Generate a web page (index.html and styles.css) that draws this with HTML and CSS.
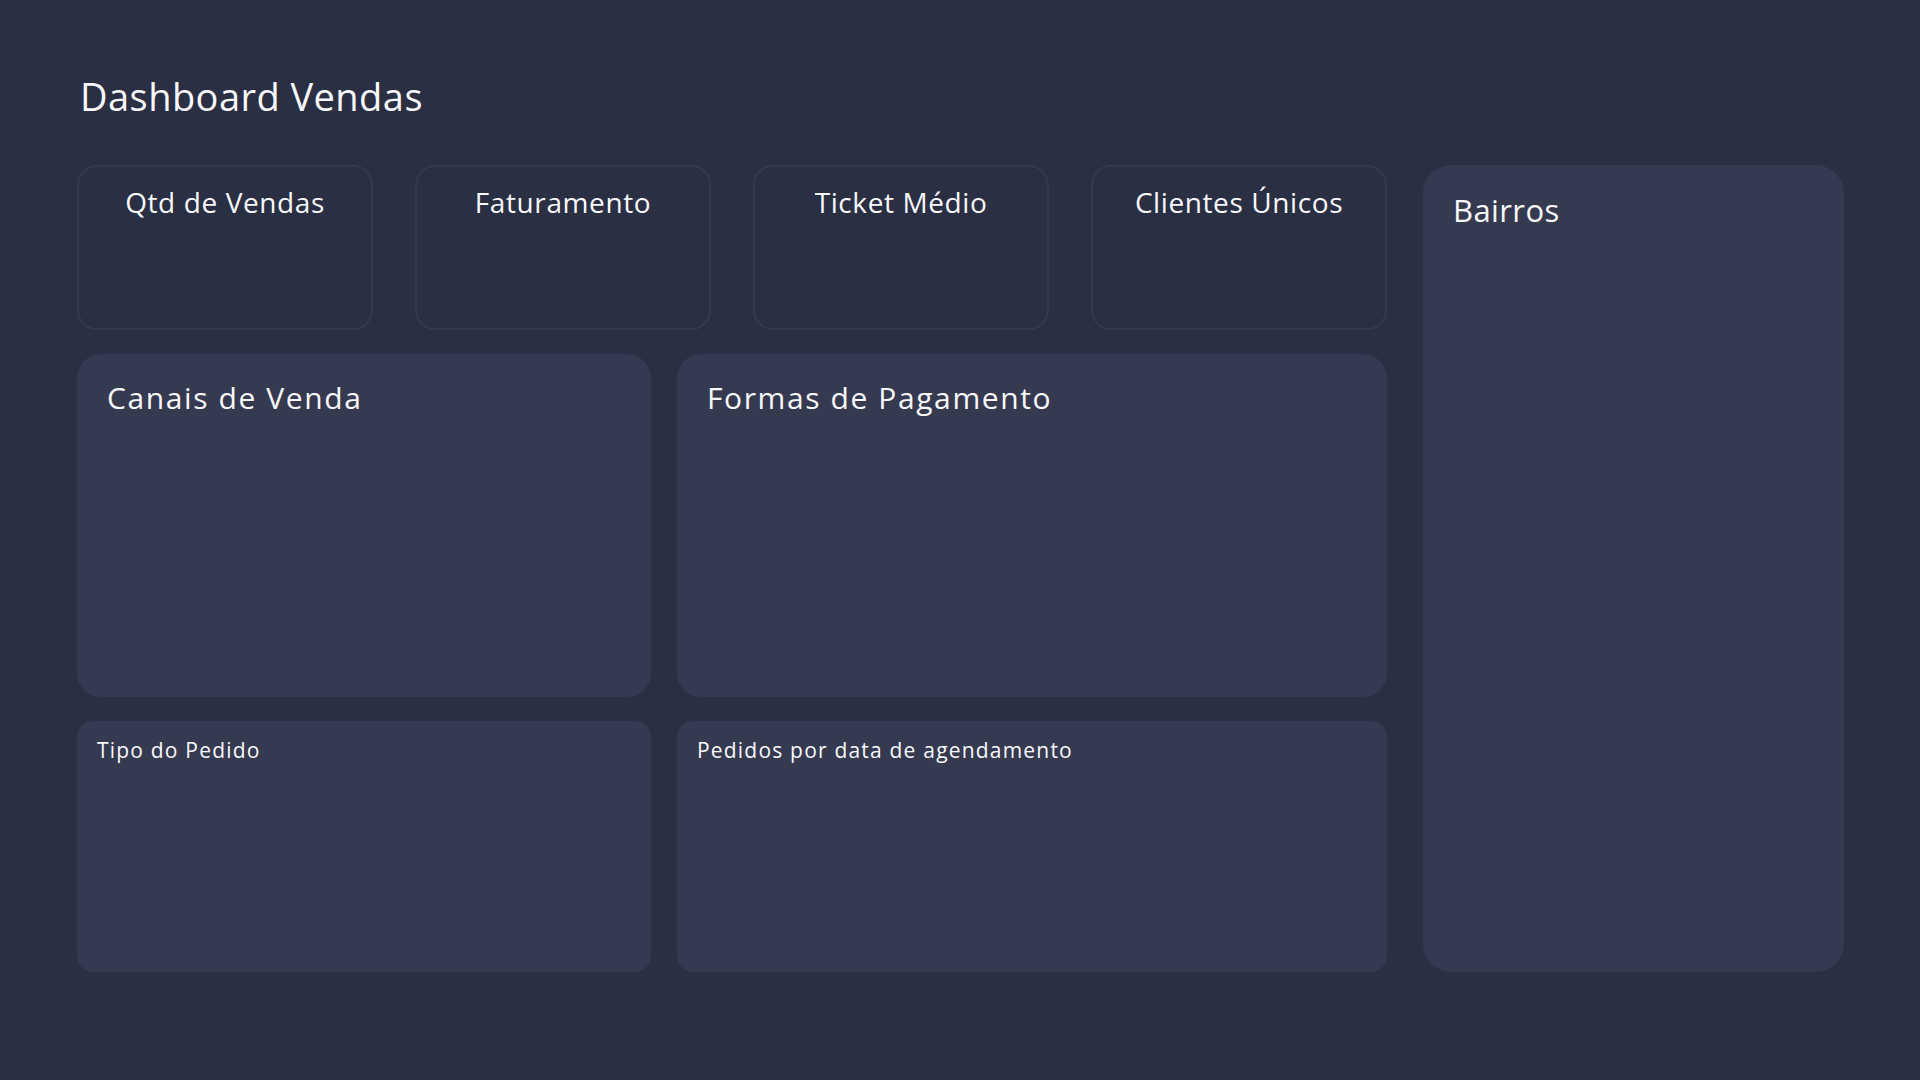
FILE: index.html
```html
<!DOCTYPE html>
<html lang="pt-BR">
<head>
<meta charset="utf-8">
<title>Dashboard Vendas</title>
<link rel="stylesheet" href="styles.css">
</head>
<body>
<div class="page">
  <h1 class="page-title">Dashboard Vendas</h1>
  <div class="main">
    <div class="left">
      <div class="kpis">
        <div class="kpi"><h2 class="kpi-title">Qtd de Vendas</h2></div>
        <div class="kpi"><h2 class="kpi-title">Faturamento</h2></div>
        <div class="kpi"><h2 class="kpi-title">Ticket Médio</h2></div>
        <div class="kpi"><h2 class="kpi-title">Clientes Únicos</h2></div>
      </div>
      <div class="row mid">
        <div class="panel panel-lg"><h2 class="panel-title">Canais de Venda</h2></div>
        <div class="panel panel-lg"><h2 class="panel-title">Formas de Pagamento</h2></div>
      </div>
      <div class="row bot">
        <div class="panel panel-sm"><h3 class="small-title">Tipo do Pedido</h3></div>
        <div class="panel panel-sm"><h3 class="small-title">Pedidos por data de agendamento</h3></div>
      </div>
    </div>
    <div class="panel side"><h2 class="panel-title side-title">Bairros</h2></div>
  </div>
</div>
</body>
</html>
```
FILE: styles.css
```css
* { box-sizing: border-box; }
html, body { margin: 0; padding: 0; }
body {
  background: #2a2f43;
  color: #f8f8fb;
  font-family: "Open Sans", "Noto Sans", sans-serif;
  width: 1920px;
  height: 1080px;
  overflow: hidden;
}
.page {
  padding: 77px 0 0 77px;
}
.page-title {
  margin: 0;
  padding-left: 3px;
  font-size: 38px;
  font-weight: 500;
  line-height: 1;
  height: 38px;
  letter-spacing: 0.45px;
}
.main {
  margin-top: 50px;
  display: grid;
  grid-template-columns: 1310px 421px;
  column-gap: 36px;
  height: 807px;
}
.left {
  display: flex;
  flex-direction: column;
  gap: 24px;
}
.kpis {
  display: grid;
  grid-template-columns: repeat(4, 296px);
  column-gap: 42px;
  height: 165px;
}
.kpi {
  border: 2px solid #343950;
  border-radius: 20px;
  background: #2a2f43;
  padding-top: 21px;
  text-align: center;
}
.kpi-title {
  margin: 0;
  font-size: 28px;
  font-weight: 500;
  line-height: 1;
  letter-spacing: 0.6px;
}
.row {
  display: grid;
  grid-template-columns: 574px 710px;
  column-gap: 26px;
}
.mid { height: 343px; }
.bot { height: 251px; }
.panel {
  background: #363a50;
}
.panel-lg {
  border-radius: 24px;
  padding: 29px 30px;
}
.panel-sm {
  border-radius: 16px;
  padding: 19px 20px;
}
.panel-title {
  margin: 0;
  font-size: 30px;
  font-weight: 500;
  line-height: 1;
  letter-spacing: 1.6px;
}
.small-title {
  margin: 0;
  font-size: 21px;
  font-weight: 500;
  line-height: 1;
  letter-spacing: 1.2px;
}
.side {
  border-radius: 28px;
  padding: 30px;
}
.side-title {
  font-size: 31px;
  letter-spacing: 0.4px;
}
```
